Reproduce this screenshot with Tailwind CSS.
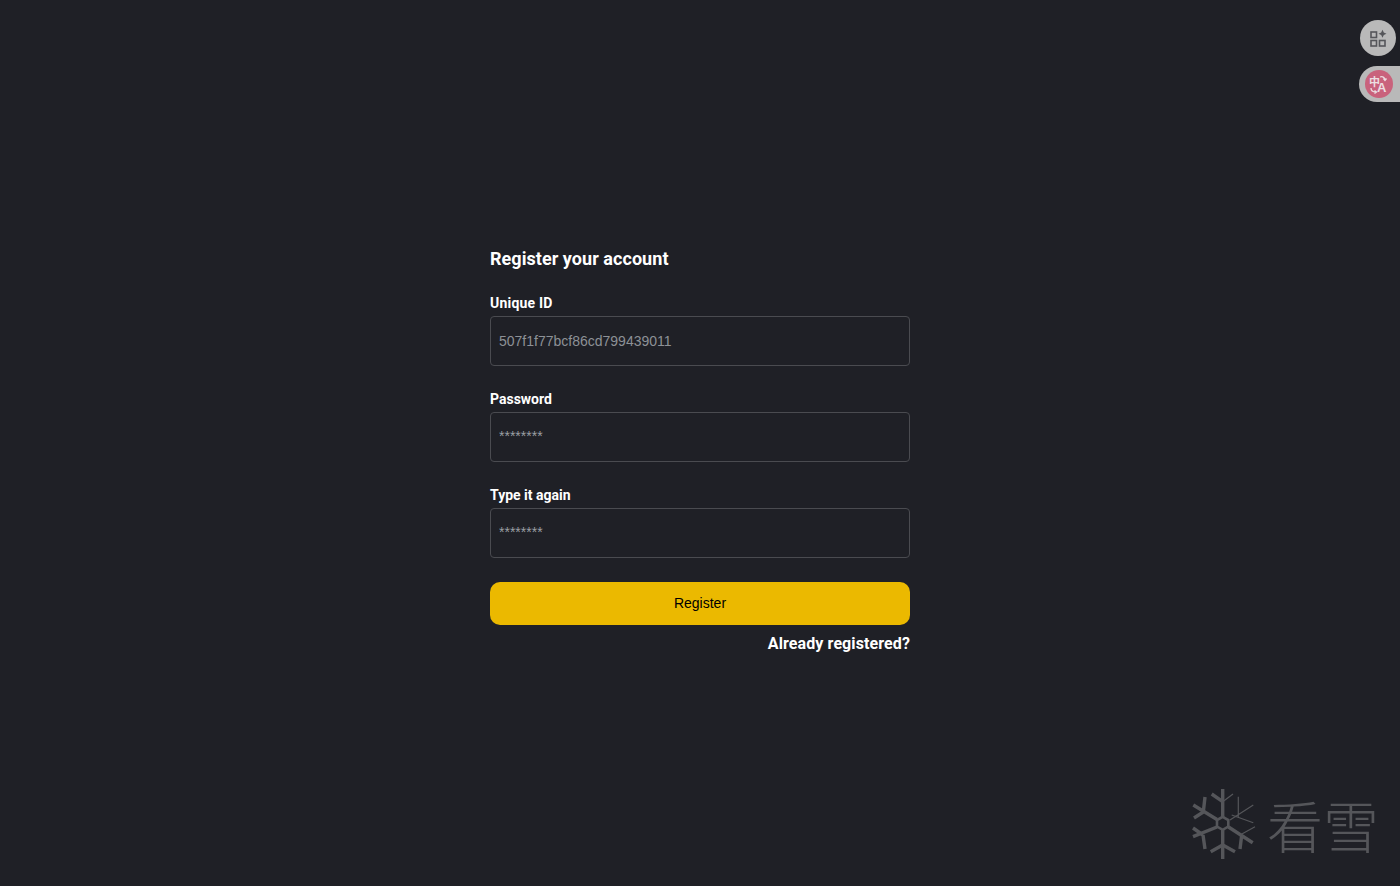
<!DOCTYPE html>
<html lang="en">
<head>
    <meta charset="UTF-8">
    <meta name="viewport" content="width=device-width, initial-scale=1.0">
    <title>Register your account</title>
    <script src="https://cdn.jsdelivr.net/npm/@tailwindcss/browser@4"></script>
</head>
<body class="bg-[#1f2026] h-screen overflow-hidden relative font-['Roboto',sans-serif]">
    <!-- form -->
    <div class="w-[420px] mx-auto pt-[247px]">
        <h1 class="text-white text-[18px] leading-[24px] font-bold tracking-[0.05px] mb-[22px]">Register your account</h1>

        <div class="mb-[23px]">
            <label class="block text-white text-[14px] leading-[20px] font-bold tracking-[0.2px] mb-[3px]">Unique ID</label>
            <input type="text" value="507f1f77bcf86cd799439011" class="w-full h-[50px] px-2 bg-transparent border border-[#4a4b50] rounded-[4px] text-[14px] text-[#8d9196] font-['Liberation_Sans',sans-serif] outline-none">
        </div>

        <div class="mb-[23px]">
            <label class="block text-white text-[14px] leading-[20px] font-bold mb-[3px]">Password</label>
            <input type="password" placeholder="********" class="w-full h-[50px] px-2 pb-[2px] bg-transparent border border-[#4a4b50] rounded-[4px] text-[14px] placeholder:text-[#9a9ea3] font-['Liberation_Sans',sans-serif] outline-none">
        </div>

        <div class="mb-[24px]">
            <label class="block text-white text-[14px] leading-[20px] font-bold mb-[3px]">Type it again</label>
            <input type="password" placeholder="********" class="w-full h-[50px] px-2 pb-[2px] bg-transparent border border-[#4a4b50] rounded-[4px] text-[14px] placeholder:text-[#9a9ea3] font-['Liberation_Sans',sans-serif] outline-none">
        </div>

        <button class="w-full h-[43px] pb-[1px] bg-[#ebb900] rounded-[10px] text-black text-[14px] font-['Liberation_Sans',sans-serif]">Register</button>

        <div class="text-right mt-[7px]">
            <a href="#" class="text-white text-[16px] leading-[22px] font-bold tracking-[0.1px]">Already registered?</a>
        </div>
    </div>

    <!-- browser extension buttons -->
    <div class="absolute top-[20px] right-[4px] w-[36px] h-[36px] rounded-full bg-[#b9b9b9] flex items-center justify-center">
        <svg width="18" height="18" viewBox="0 0 18 18" fill="none" stroke="#55565a" stroke-width="1.6">
            <rect x="2" y="3" width="5.5" height="5.5"/>
            <rect x="2" y="11.5" width="5.5" height="5.5"/>
            <rect x="10.5" y="11.5" width="5.5" height="5.5"/>
            <path d="M13.5 .8 L14.8 3.5 L17.5 4.8 L14.8 6.1 L13.5 8.8 L12.2 6.1 L9.5 4.8 L12.2 3.5Z" fill="#55565a" stroke="none"/>
        </svg>
    </div>
    <div class="absolute top-[66px] right-0 w-[41px] h-[36px] rounded-l-full bg-[#b9b9b9] pl-[6px] pt-[4px]">
        <div class="w-[28px] h-[28px] rounded-full bg-[#c9627c] relative text-[#ecdde1]">
            <span class="absolute left-[4px] top-[5px] text-[11px] leading-[12px] font-bold font-['Noto_Sans_CJK_SC',sans-serif]">中</span>
            <span class="absolute left-[12px] top-[11px] text-[13px] leading-[14px] font-bold font-['Liberation_Sans',sans-serif]">A</span>
            <svg class="absolute left-0 top-0" width="28" height="28" viewBox="0 0 28 28" fill="none" stroke="#ecdde1" stroke-width="1.3">
                <path d="M15 7 C18 6 20 8 20 10 M18.5 8.5 L20 10.5 L21.5 8.5"/>
                <path d="M6 18 C6 21 8 22 11 22 M9.5 20.5 L11.5 22 L9.5 23.5"/>
            </svg>
        </div>
    </div>

    <!-- watermark -->
    <div class="absolute left-[1190px] top-[787px] flex items-center">
        <svg width="66" height="74" viewBox="0 0 66 74" fill="none" stroke="#55565a" stroke-width="3.4">
            <path d="M32.7 2 V30 M32.7 43 V72"/>
            <path d="M21.7 7 L32.7 14.7 M20.7 64.7 L32.7 58 L45 64.7"/>
            <path d="M3.3 18 L27 32.5 M3 49.7 L27 40 M38.5 40 L62.7 55.7"/>
            <path d="M13.3 25 L15 10 M13.3 25 L4 31 M13 48 L3 41 M13 48 L15 62 M51.7 48 L50 62"/>
            <path d="M32.7 29.8 L38.3 33 V39.6 L32.7 42.8 L27 39.6 V33Z" stroke-width="2.6"/>
            <g stroke-width="1.2">
                <path d="M32.7 14.7 L43 7 M48.3 9.7 V29.7 M40 33 L63.3 18 M41.7 28 L63.3 35.7 M50 48 L65 39.7"/>
            </g>
        </svg>
        <div class="ml-[11px] text-[#55565a] text-[56px] leading-[74px] font-light font-['Noto_Sans_CJK_SC',sans-serif]">看雪</div>
    </div>
</body>
</html>
